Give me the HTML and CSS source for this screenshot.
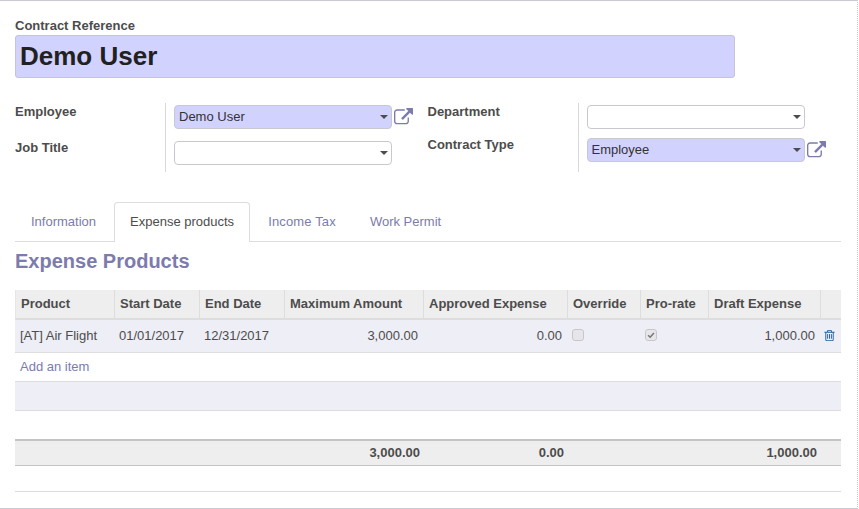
FILE: index.html
```html
<!DOCTYPE html>
<html lang="en">
<head>
    <meta charset="UTF-8">
    <title>Contract</title>
    <link rel="stylesheet" href="styles.css">
</head>
<body>
    <div class="sheet">
        <label class="title-label">Contract Reference</label>
        <div class="title-input">Demo User</div>

        <div class="groups">
            <div class="group">
                <div class="labels">
                    <div class="label-row">Employee</div>
                    <div class="label-row">Job Title</div>
                </div>
                <div class="fields">
                    <div class="field">
                        <div class="select required">Demo User<span class="caret"></span></div>
                        <svg class="ext" viewBox="0 0 1792 1792"><path d="M1408 928v320q0 119-84.500 203.500t-203.500 84.500h-832q-119 0-203.500-84.500t-84.500-203.500v-832q0-119 84.500-203.500t203.500-84.500h704q14 0 23 9t9 23v64q0 14-9 23t-23 9h-704q-66 0-113 47t-47 113v832q0 66 47 113t113 47h832q66 0 113-47t47-113v-320q0-14 9-23t23-9h64q14 0 23 9t9 23zm384-864v512q0 26-19 45t-45 19-45-19l-176-176-652 652q-10 10-23 10t-23-10l-114-114q-10-10-10-23t10-23l652-652-176-176q-19-19-19-45t19-45 45-19h512q26 0 45 19t19 45z"/></svg>
                    </div>
                    <div class="field">
                        <div class="select"><span class="caret"></span></div>
                    </div>
                </div>
            </div>
            <div class="group second">
                <div class="labels">
                    <div class="label-row">Department</div>
                    <div class="label-row">Contract Type</div>
                </div>
                <div class="fields">
                    <div class="field">
                        <div class="select"><span class="caret"></span></div>
                    </div>
                    <div class="field">
                        <div class="select required">Employee<span class="caret"></span></div>
                        <svg class="ext" viewBox="0 0 1792 1792"><path d="M1408 928v320q0 119-84.500 203.500t-203.500 84.500h-832q-119 0-203.500-84.500t-84.500-203.500v-832q0-119 84.500-203.500t203.500-84.500h704q14 0 23 9t9 23v64q0 14-9 23t-23 9h-704q-66 0-113 47t-47 113v832q0 66 47 113t113 47h832q66 0 113-47t47-113v-320q0-14 9-23t23-9h64q14 0 23 9t9 23zm384-864v512q0 26-19 45t-45 19-45-19l-176-176-652 652q-10 10-23 10t-23-10l-114-114q-10-10-10-23t10-23l652-652-176-176q-19-19-19-45t19-45 45-19h512q26 0 45 19t19 45z"/></svg>
                    </div>
                </div>
            </div>
        </div>

        <ul class="tabs">
            <li>Information</li>
            <li class="active">Expense products</li>
            <li class="income">Income Tax</li>
            <li>Work Permit</li>
        </ul>

        <h2 class="section-title">Expense Products</h2>

        <table class="lines">
            <colgroup>
                <col class="c-product"><col class="c-date"><col class="c-date"><col class="c-max">
                <col class="c-approved"><col class="c-override"><col class="c-prorate"><col class="c-draft"><col class="c-del">
            </colgroup>
            <thead>
                <tr>
                    <th>Product</th>
                    <th>Start Date</th>
                    <th>End Date</th>
                    <th>Maximum Amount</th>
                    <th>Approved Expense</th>
                    <th>Override</th>
                    <th>Pro-rate</th>
                    <th>Draft Expense</th>
                    <th></th>
                </tr>
            </thead>
            <tbody>
                <tr class="item first shaded">
                    <td>[AT] Air Flight</td>
                    <td>01/01/2017</td>
                    <td>12/31/2017</td>
                    <td class="num">3,000.00</td>
                    <td class="num">0.00</td>
                    <td class="box"><span class="check"></span></td>
                    <td class="box"><span class="check checked"><svg viewBox="0 0 12 12"><path d="M2.500 6.200l2.500 2.500 4.500-5.200" /></svg></span></td>
                    <td class="num">1,000.00</td>
                    <td class="del">
                        <svg class="trash" viewBox="0 0 1792 1792"><path d="M704 736v576q0 14-9 23t-23 9h-64q-14 0-23-9t-9-23v-576q0-14 9-23t23-9h64q14 0 23 9t9 23zm256 0v576q0 14-9 23t-23 9h-64q-14 0-23-9t-9-23v-576q0-14 9-23t23-9h64q14 0 23 9t9 23zm256 0v576q0 14-9 23t-23 9h-64q-14 0-23-9t-9-23v-576q0-14 9-23t23-9h64q14 0 23 9t9 23zm128 724v-948h-896v948q0 22 7 40.500t14.500 27 10.500 8.500h832q3 0 10.500-8.500t14.500-27 7-40.500zm-672-1076h448l-48-117q-7-9-17-11h-317q-10 2-17 11zm928 32v64q0 14-9 23t-23 9h-96v948q0 83-47 143.500t-113 60.500h-832q-66 0-113-58.500t-47-141.500v-952h-96q-14 0-23-9t-9-23v-64q0-14 9-23t23-9h309l70-167q15-37 54-63t79-26h320q40 0 79 26t54 63l70 167h309q14 0 23 9t9 23z"/></svg>
                    </td>
                </tr>
                <tr class="item add">
                    <td colspan="9">Add an item</td>
                </tr>
                <tr class="item shaded"><td colspan="9"></td></tr>
                <tr class="item blank"><td colspan="9"></td></tr>
            </tbody>
            <tfoot>
                <tr>
                    <td colspan="3"></td>
                    <td class="num">3,000.00</td>
                    <td class="num">0.00</td>
                    <td colspan="2"></td>
                    <td class="num">1,000.00</td>
                    <td></td>
                </tr>
            </tfoot>
        </table>

        <div class="after-table"></div>
    </div>
</body>
</html>
```

FILE: styles.css
```css
html, body {
    margin: 0;
    padding: 0;
    background: #fff;
}

body {
    font-family: "Liberation Sans", Arial, sans-serif;
    font-size: 13px;
    color: #4c4c4c;
}

.sheet {
    box-sizing: border-box;
    width: 858px;
    height: 509px;
    padding: 17px 17px 0 15px;
    border-top: 1px solid #c9c9d3;
    border-bottom: 1px solid #c9c9d3;
    border-right: 1px dotted #c9c9d3;
    overflow: hidden;
}

.title-label {
    display: block;
    font-weight: bold;
    line-height: 15px;
    margin-bottom: 2px;
}

.title-input {
    box-sizing: border-box;
    width: 720px;
    height: 43px;
    padding-left: 4px;
    background: #d2d2ff;
    border: 1px solid #c4c4d6;
    border-radius: 3px;
    color: #212121;
    font-size: 26px;
    font-weight: bold;
    line-height: 40px;
}

/* two columns of fields */
.groups {
    display: flex;
    margin-top: 25px;
}

.group {
    display: flex;
    width: 413px;
}

.labels {
    width: 150px;
    flex: none;
    font-weight: bold;
}

.label-row {
    height: 36px;
    padding-top: 1px;
    line-height: 15px;
    box-sizing: border-box;
}

.second .label-row {
    height: 33px;
}

.fields {
    box-sizing: border-box;
    height: 69px;
    padding: 2px 0 0 8px;
    border-left: 1px solid #d9d9d9;
}

.field {
    display: flex;
    align-items: center;
    height: 24px;
    margin-bottom: 12px;
}

.second .field {
    margin-bottom: 9px;
}

.select {
    box-sizing: border-box;
    position: relative;
    width: 218px;
    height: 24px;
    padding-left: 4px;
    background: #fff;
    border: 1px solid #c8c8d0;
    border-radius: 4px;
    color: #333;
    line-height: 22px;
}

.select.required {
    background: #d2d2ff;
}

.caret {
    position: absolute;
    top: 9px;
    right: 3px;
    border-top: 4px solid #4c4c4c;
    border-left: 4px solid transparent;
    border-right: 4px solid transparent;
}

.ext {
    width: 19px;
    height: 19px;
    margin-left: 2px;
    fill: #7c7bad;
}

/* tabs */
.tabs {
    display: flex;
    gap: 2px;
    list-style: none;
    margin: 27px 0 0;
    padding: 0;
    height: 39px;
    width: 826px;
    border-bottom: 1px solid #ddd;
}

.tabs li {
    box-sizing: border-box;
    height: 40px;
    padding: 10px 15px 0;
    line-height: 18px;
    color: #7c7bad;
    border: 1px solid transparent;
    border-bottom: 0;
    border-radius: 4px 4px 0 0;
}

.tabs li.active {
    color: #4c4c4c;
    background: #fff;
    border-color: #ddd;
}

.tabs li.income {
    letter-spacing: 0.15px;
}

.section-title {
    margin: 8px 0 17px;
    font-size: 20px;
    line-height: 23px;
    font-weight: bold;
    color: #7c7bad;
}

/* lines table */
.lines {
    width: 826px;
    table-layout: fixed;
    border-collapse: separate;
    border-spacing: 0;
    color: #4c4c4c;
}

.c-product { width: 99px; }
.c-date { width: 85px; }
.c-max { width: 139px; }
.c-approved { width: 144px; }
.c-override { width: 73px; }
.c-prorate { width: 68px; }
.c-draft { width: 112px; }
.c-del { width: 21px; }

.lines th {
    box-sizing: border-box;
    height: 30px;
    padding: 0 5px 2px;
    background: #eee;
    border-left: 1px solid #ddd;
    border-bottom: 2px solid #ddd;
    text-align: left;
    font-weight: bold;
    white-space: nowrap;
}

.lines th:first-child {
    border-left: 1px solid #e6e6e6;
}

.lines .item td {
    box-sizing: border-box;
    height: 29px;
    padding: 0 5px 2px;
    border-bottom: 1px solid #ddd;
    white-space: nowrap;
}

.lines .first td {
    height: 33px;
}

.lines .blank td {
    height: 28px;
    border-bottom: 0;
}

.shaded {
    background: #eeeef6;
}

.add td {
    color: #7c7bad;
}

.lines .num {
    text-align: right;
}

.lines .item .del {
    padding: 0 0 2px 3px;
}

.trash {
    display: block;
    width: 13px;
    height: 13px;
    fill: #1f5f9f;
}

.lines .item .box {
    padding-bottom: 0;
}

.check {
    display: block;
    box-sizing: border-box;
    width: 12px;
    height: 12px;
    margin-top: -2px;
    background: #e6e6ea;
    border: 1px solid #c6c6cc;
    border-radius: 3px;
}

.check svg {
    display: block;
    width: 10px;
    height: 10px;
    fill: none;
    stroke: #777;
    stroke-width: 1.800;
}

.lines tfoot td {
    box-sizing: border-box;
    height: 27px;
    padding: 0 3px 1px 5px;
    background: #eee;
    border-top: 2px solid #c4c4c4;
    border-bottom: 1px solid #c4c4c4;
    font-weight: bold;
}

.after-table {
    width: 826px;
    height: 25px;
    border-bottom: 1px solid #ddd;
}
```
